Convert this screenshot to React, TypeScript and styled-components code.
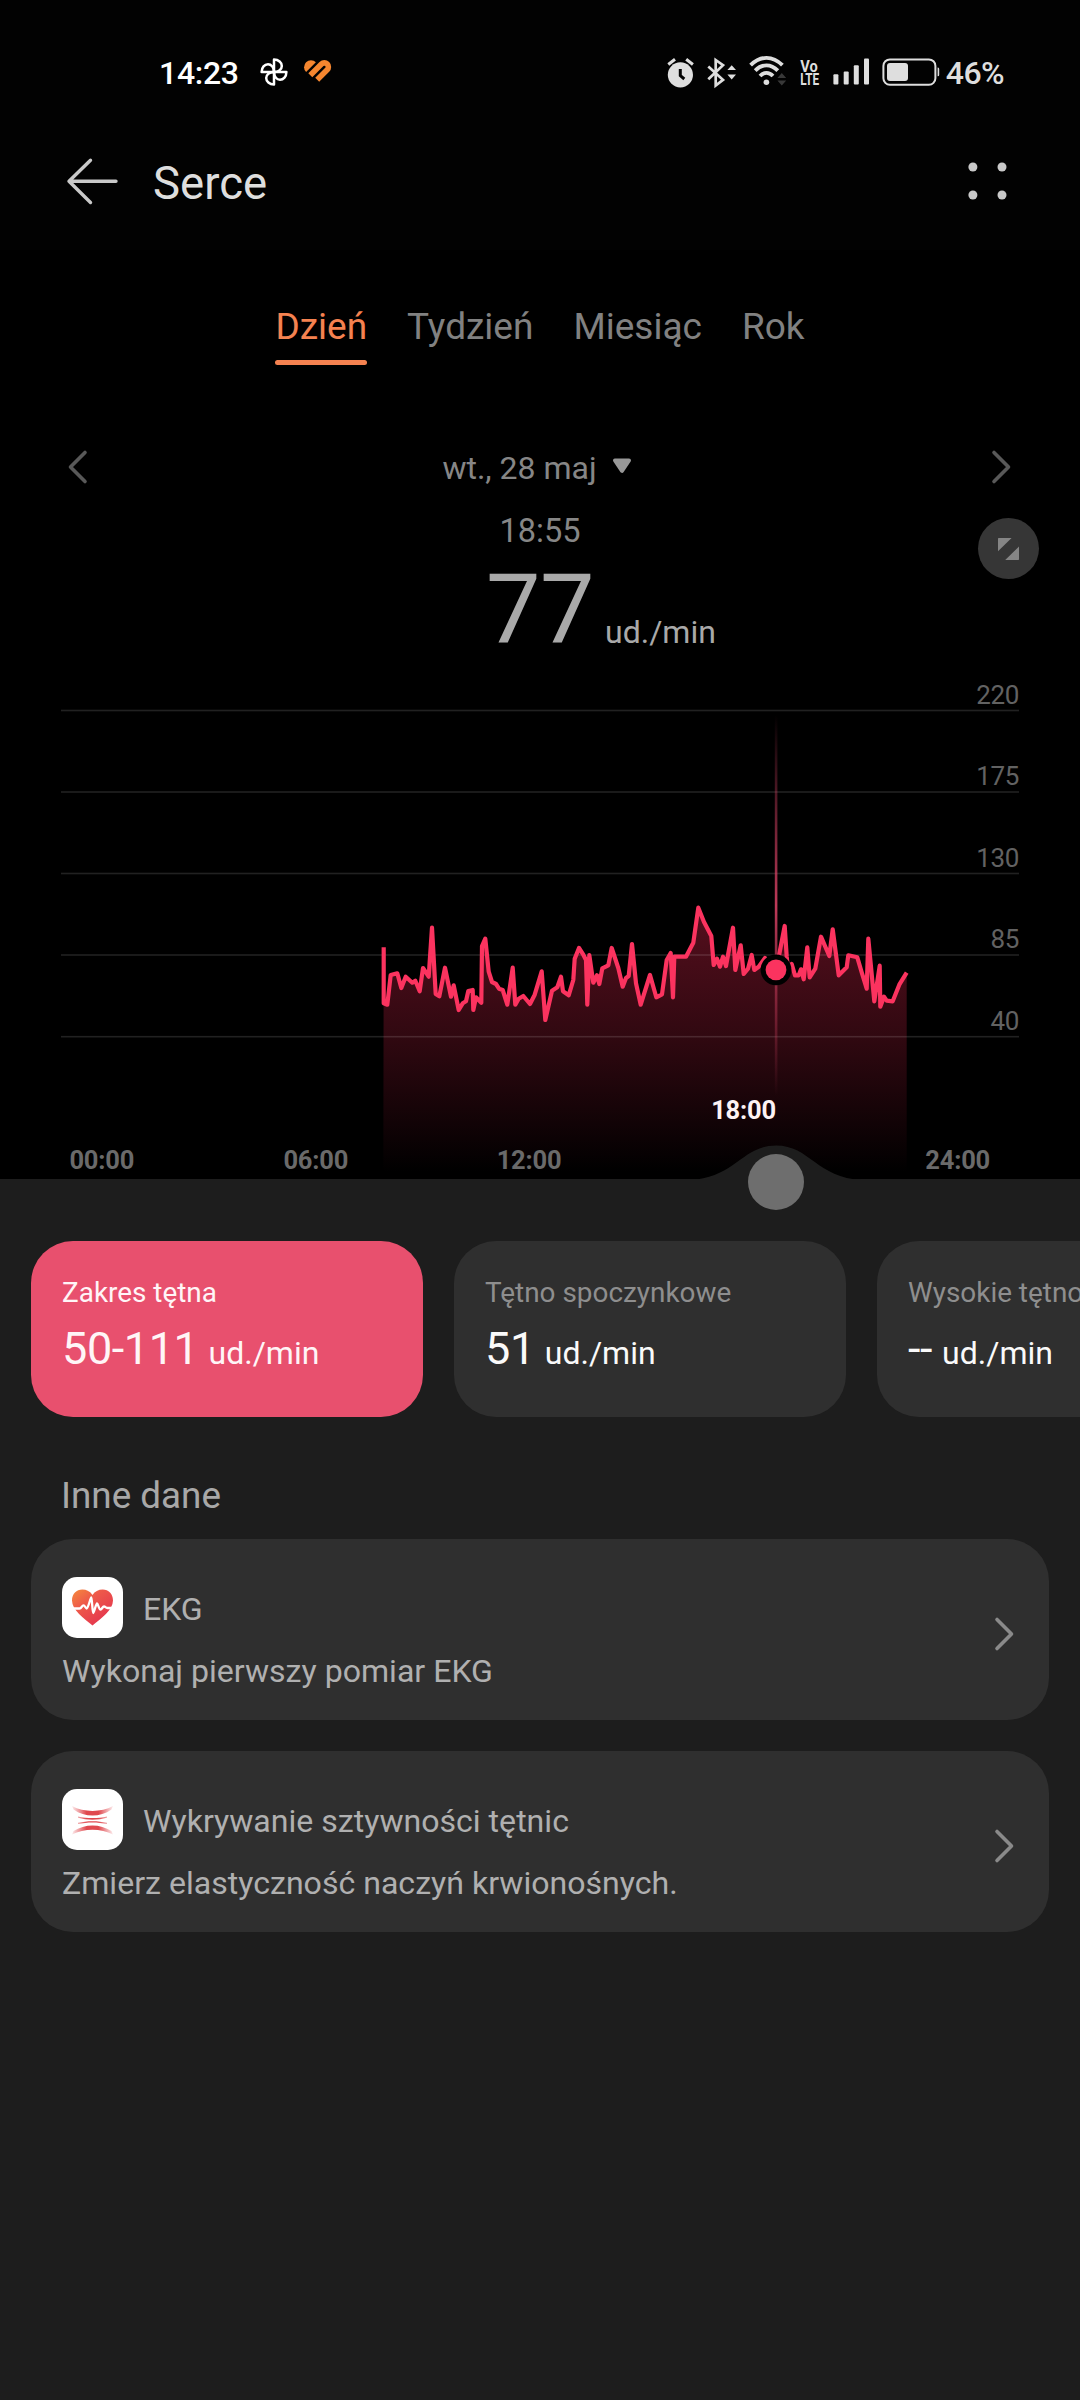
import React from "react";
import styled, { createGlobalStyle, css } from "styled-components";

const GlobalStyle = createGlobalStyle`
  html, body {
    margin: 0;
    background: #000;
  }
  body {
    font-family: Roboto, "Noto Sans", sans-serif;
    -webkit-font-smoothing: antialiased;
  }
  * { box-sizing: border-box; }
  button {
    font: inherit;
    color: inherit;
    background: none;
    border: 0;
    padding: 0;
  }
`;

const Screen = styled.div`
  width: 1080px;
  height: 2400px;
  display: flex;
  flex-direction: column;
  overflow: hidden;
  background: #000;
`;

/* ---------- Status bar ---------- */

const StatusBar = styled.div`
  height: 98px;
  padding: 48px 76px 0 159px;
  display: flex;
  justify-content: space-between;
  background: #020202;
  color: #fff;
`;

const StatusSide = styled.div`
  display: flex;
  align-items: center;
  height: 50px;
`;

const Clock = styled.span`
  width: 99px;
  font-size: 32px;
  font-weight: 500;
  letter-spacing: -0.3px;
`;

const Percent = styled.span`
  font-size: 32px;
  color: #dedede;
  font-weight: 500;
  letter-spacing: -0.6px;
`;

const StatusIcons = styled.svg`
  display: block;
  flex: none;
`;

/* ---------- App bar ---------- */

const AppBar = styled.header`
  height: 152px;
  padding: 20px 72px 0 62px;
  display: flex;
  align-items: center;
  background: #020202;
`;

const IconButton = styled.button`
  display: flex;
  flex: none;
  svg { display: block; }
`;

const Title = styled.h1`
  flex: 1;
  margin: 0 0 0 31px;
  font-size: 45.5px;
  font-weight: 400;
  line-height: 60px;
  color: #dedede;
`;

/* ---------- Tabs ---------- */

const Tabs = styled.nav`
  display: flex;
  justify-content: center;
  gap: 40px;
  padding-top: 54px;
`;

const Tab = styled.button<{ $active?: boolean }>`
  display: flex;
  flex-direction: column;
  gap: 10px;
  font-size: 37px;
  line-height: 46px;
  color: ${(p) => (p.$active ? "#f58250" : "#818181")};
  &::after {
    content: "";
    height: 5px;
    width: 100%;
    border-radius: 3px;
    background: ${(p) => (p.$active ? "#f58250" : "transparent")};
  }
`;

/* ---------- Date and reading ---------- */

const DateRow = styled.div`
  margin-top: 78px;
  height: 50px;
  padding: 0 67px 0 66px;
  display: flex;
  align-items: center;
  justify-content: space-between;
  > svg { margin-bottom: 3px; }
`;

const DateLabel = styled.button`
  display: flex;
  align-items: center;
  gap: 15px;
  padding-right: 5px;
  font-size: 32px;
  line-height: 50px;
  color: #868686;
`;

const Reading = styled.section`
  position: relative;
  height: 167px;
  padding-top: 16px;
  text-align: center;
`;

const ReadingTime = styled.div`
  font-size: 32.5px;
  line-height: 44px;
  color: #868686;
`;

const ReadingValue = styled.div`
  margin-top: 7px;
  display: grid;
  grid-template-columns: 1fr auto 1fr;
  align-items: baseline;
  line-height: 100px;
  color: #a9a9a9;
`;

const BigNumber = styled.span`
  grid-column: 2;
  font-size: 97px;
  letter-spacing: -0.5px;
`;

const BigUnit = styled.span`
  padding-left: 11px;
  text-align: left;
  font-size: 32px;
`;

const ExpandButton = styled.button`
  position: absolute;
  top: 25px;
  right: 41px;
  width: 61px;
  height: 61px;
  border-radius: 50%;
  background: #363636;
  display: flex;
  align-items: center;
  justify-content: center;
`;

/* ---------- Chart ---------- */

const ChartSvg = styled.svg`
  position: relative;
  z-index: 1;
  display: block;
  flex: none;
  overflow: visible;
`;

const AxisLabel = styled.text`
  font-size: 26px;
  letter-spacing: -0.4px;
  fill: #626262;
`;

const HourLabel = styled.text<{ $current?: boolean }>`
  font-size: 25.5px;
  letter-spacing: -0.2px;
  font-weight: 700;
  fill: ${(p) => (p.$current ? "#fdf2f4" : "#6a6a6a")};
`;

/* ---------- Lower sheet ---------- */

const Sheet = styled.main`
  flex: 1;
  padding: 62px 31px 0;
  background: #1d1d1d;
`;

const Metrics = styled.div`
  display: flex;
  gap: 31px;
  margin-right: -31px;
  overflow: hidden;
`;

const panel = css`
  border-radius: 42px;
  background: #2f2f2f;
`;

const MetricCard = styled.div<{ $active?: boolean }>`
  ${panel}
  flex: none;
  width: 392px;
  height: 176px;
  padding: 32px 31px;
  white-space: nowrap;
  color: ${(p) => (p.$active ? "#fff5f7" : "#fafafa")};
  ${(p) => p.$active && "background: #e8506e;"}
`;

const MetricLabel = styled.div<{ $active?: boolean }>`
  font-size: 27.9px;
  line-height: 40px;
  color: ${(p) => (p.$active ? "#fff5f7" : "#8e8e8e")};
`;

const MetricValue = styled.div`
  display: flex;
  align-items: baseline;
  gap: 10px;
  margin-top: 9px;
  font-size: 45px;
  letter-spacing: -0.4px;
  line-height: 54px;
`;

const MetricUnit = styled.span`
  font-size: 32px;
  letter-spacing: 0;
`;

const SectionTitle = styled.h2`
  margin: 56px 0 20px 30px;
  font-size: 36.8px;
  font-weight: 400;
  line-height: 46px;
  color: #a8a8a8;
`;

const ItemList = styled.div`
  display: grid;
  gap: 31px;
`;

const ItemCard = styled.article`
  ${panel}
  height: 181px;
  padding: 38px 33px 0 31px;
  display: grid;
  grid-template-columns: 1fr auto;
  column-gap: 20px;
`;

const ItemHead = styled.div`
  display: flex;
  align-items: center;
  gap: 20px;
`;

const ItemTitle = styled.span`
  font-size: 32.1px;
  line-height: 44px;
  color: #b0b0b0;
  padding-top: 2px;
`;

const ItemText = styled.p`
  margin: 11px 0 0;
  font-size: 32.1px;
  line-height: 45px;
  color: #b0b0b0;
`;

const AppIcon = styled.svg`
  display: block;
  width: 61px;
  height: 61px;
  border-radius: 15px;
  background: #fff;
`;

const ItemArrow = styled.div`
  padding-top: 38px;
`;

const ChevronSvg = styled.svg`
  display: block;
`;

function Chevron({ left, color }: { left?: boolean; color: string }) {
  return (
    <ChevronSvg width="24" height="38" viewBox="0 0 24 38">
      <path
        d={left ? "M19 4.5 4.5 19 19 33.5" : "M5 4.5 19.5 19 5 33.5"}
        fill="none"
        stroke={color}
        strokeWidth="3.6"
        strokeLinecap="round"
        strokeLinejoin="round"
      />
    </ChevronSvg>
  );
}

const CaretSvg = styled.svg`
  display: block;
  margin-bottom: 4px;
`;

function NotificationIcons() {
  const petal = "M0 0V-12.4C4.6-12.4 7.800-9.400 7.800-6 7.800-3 5 0 0 0Z";
  return (
    <StatusIcons width="76" height="50" viewBox="258 48 76 50">
      <g transform="translate(274 72)" fill="none" stroke="#fff" strokeWidth="2.5" strokeLinejoin="round">
        {[0, 90, 180, 270].map((a) => (
          <path key={a} d={petal} transform={`rotate(${a})`} />
        ))}
      </g>
      <path fill="#f5862f" d="M315.900 62.300A6.900 6.900 0 0 0 306.100 72.100Z" />
      <path
        fill="none"
        stroke="#f5862f"
        strokeWidth="5.600"
        d="M310.300 75.300 321.500 64.100A4 4 0 0 1 327.200 69.800L317.200 79.800"
      />
    </StatusIcons>
  );
}

function SystemIcons() {
  return (
    <StatusIcons width="282" height="50" viewBox="664 48 282 50">
      <g fill="#dedede">
        <circle cx="680.4" cy="74.8" r="12.6" />
        <path d="M668.3 64.5 675 59.2M692.9 64.5 686.2 59.2" stroke="#dedede" strokeWidth="3" />
        <path d="M680.3 69v6.6l4 3.4" fill="none" stroke="#020202" strokeWidth="3" />
        <path
          d="M708.3 66.5 723 79.8 715.7 85.5V60L723 65.2 708.3 79.3"
          fill="none"
          stroke="#dedede"
          strokeWidth="2.7"
        />
        <path d="M727.4 70h8.6l-4.3-4.8zM727.4 74.6h8.6l-4.3 4.8z" />
        <g fill="none" stroke="#dedede" strokeWidth="3.9">
          <path d="M750.6 65.2C760.5 55.4 772.5 55.4 782.4 65.2" />
          <path d="M755.2 70.6C762.2 63.6 770.8 63.6 777.8 70.6" />
          <path d="M760 76C764 71.8 769 71.8 773 76" />
        </g>
        <circle cx="766.4" cy="82.2" r="2.8" />
        <path d="M777.4 78h8.8l-4.4-5zM777.4 80.6h8.8l-4.4 5z" fill="#383838" />
        <text x="800.2" y="71.6" fontSize="16.5" fontWeight="700" textLength="17.5" lengthAdjust="spacingAndGlyphs">Vo</text>
        <text x="800.2" y="85" fontSize="16.5" fontWeight="700" textLength="19" lengthAdjust="spacingAndGlyphs">LTE</text>
        <rect x="833.4" y="74.2" width="5" height="10.4" rx="1" />
        <rect x="843.7" y="71.4" width="5" height="13.2" rx="1" />
        <rect x="853.8" y="65.2" width="5" height="19.4" rx="1" />
        <rect x="864" y="58.6" width="5" height="26" rx="1" />
        <rect x="883.4" y="59.4" width="52" height="25.4" rx="6.5" fill="none" stroke="#dedede" strokeWidth="2" />
        <rect x="887" y="63" width="21" height="18" rx="3" />
        <path d="M937.6 67.5h.4a1.4 1.4 0 0 1 1.2 1.4v6a1.4 1.4 0 0 1-1.2 1.4h-.4z" />
      </g>
    </StatusIcons>
  );
}

/* Heart-rate trace, in screen units. */
const trace: [number, number][] = [
  ...([
    [41, 262], [41, 430], [52, 434], [62, 345], [82, 340], [94, 384], [107, 350], [127, 368], [136, 362],
    [149, 394], [159, 324], [176, 350], [186, 203], [197, 402], [208, 409], [225, 323], [243, 410], [251, 376],
    [266, 450], [278, 430], [288, 424], [295, 393], [308, 390], [310, 450], [318, 412], [334, 428], [336, 258],
    [346, 236], [356, 335], [366, 366], [378, 372], [387, 386], [398, 390], [412, 434], [428, 323], [436, 434],
    [446, 416], [460, 408], [480, 432], [494, 404], [515, 334], [526, 480], [546, 392], [562, 382], [573, 350],
    [579, 394], [596, 406], [610, 360], [614, 296], [627, 264], [640, 284], [648, 300], [652, 434], [658, 285],
    [670, 368], [681, 346], [688, 372], [697, 325], [715, 316], [725, 264], [745, 324], [758, 380], [768, 354],
    [776, 348], [786, 252], [798, 370], [812, 434], [840, 345],
    [859, 412], [876, 403], [890, 300], [902, 279], [909, 412], [913, 290], [948, 290], [970, 248], [985, 143],
    [1002, 186], [1024, 228], [1031, 315], [1041, 296], [1050, 320], [1059, 290], [1068, 318], [1089, 203],
    [1096, 330], [1112, 256], [1121, 342], [1134, 326], [1145, 285], [1153, 330], [1166, 320], [1185, 294],
    [1200, 330], [1218, 330], [1228, 282], [1244, 198], [1250, 290], [1254, 330], [1265, 312], [1275, 346],
    [1286, 346], [1293, 328], [1301, 358], [1312, 262], [1319, 352], [1336, 326], [1353, 230], [1378, 288],
    [1388, 208], [1406, 346], [1430, 322], [1435, 286], [1462, 292], [1476, 340], [1490, 386], [1495, 236],
    [1513, 424], [1529, 317], [1531, 440], [1542, 410], [1550, 422], [1568, 424], [1588, 374], [1610, 338],
  ] as [number, number][]).map(([x, y]): [number, number] => [370 + x / 3, 860 + y / 3]),
];

const linePath = "M" + trace.map(([x, y]) => `${x.toFixed(1)} ${y.toFixed(1)}`).join("L");
const areaPath = `${linePath}L906.7 1172L383.3 1172Z`;

const gridRows = [
  { value: 220, y: 710.5 },
  { value: 175, y: 792 },
  { value: 130, y: 873.5 },
  { value: 85, y: 955 },
  { value: 40, y: 1036.7 },
];

const hours = [
  { label: "00:00", x: 101.8, y: 1169 },
  { label: "06:00", x: 315.8, y: 1169 },
  { label: "12:00", x: 529, y: 1169 },
  { label: "18:00", x: 743.5, y: 1119, current: true },
  { label: "24:00", x: 957.7, y: 1169 },
];

function HeartChart() {
  return (
    <ChartSvg width="1080" height="519" viewBox="0 660 1080 519">
      <defs>
        <linearGradient id="area" gradientUnits="userSpaceOnUse" x1="0" y1="900" x2="0" y2="1172">
          <stop offset="0" stopColor="#e82850" stopOpacity="0.38" />
          <stop offset="0.5" stopColor="#e82850" stopOpacity="0.21" />
          <stop offset="1" stopColor="#e82850" stopOpacity="0" />
        </linearGradient>
        <linearGradient id="cursor" gradientUnits="userSpaceOnUse" x1="0" y1="715" x2="0" y2="1096">
          <stop offset="0" stopColor="#e04468" stopOpacity="0" />
          <stop offset="0.5" stopColor="#e04468" stopOpacity="0.85" />
          <stop offset="1" stopColor="#e04468" stopOpacity="0" />
        </linearGradient>
      </defs>
      <path d={areaPath} fill="url(#area)" />
      {gridRows.map((row) => (
        <g key={row.value}>
          <rect x="61" y={row.y - 0.8} width="958" height="1.6" fill="#fff" fillOpacity="0.13" />
          <AxisLabel x="1019" y={row.y - 7} textAnchor="end">{row.value}</AxisLabel>
        </g>
      ))}
      <path d={linePath} fill="none" stroke="#fb335f" strokeWidth="4.2" strokeLinejoin="round" />
      <rect x="774.8" y="715" width="2.6" height="381" fill="url(#cursor)" />
      <circle cx="776" cy="969.8" r="15.4" fill="#000" />
      <circle cx="776" cy="969.8" r="10.4" fill="#fb335f" />
      {hours.map((h) => (
        <HourLabel key={h.label} x={h.x} y={h.y} $current={h.current} textAnchor="middle">{h.label}</HourLabel>
      ))}
      <path d="M690 1180C735 1178 742 1145.500 776 1145.500S817 1178 862 1180Z" fill="#1d1d1d" />
      <circle cx="776" cy="1182" r="28" fill="#6e6e6e" />
    </ChartSvg>
  );
}

function EcgIcon() {
  return (
    <AppIcon viewBox="0 0 61 61">
      <defs>
        <linearGradient id="heart" x1="0" y1="0" x2="0.7" y2="0.8">
          <stop offset="0" stopColor="#f58a3c" />
          <stop offset="0.45" stopColor="#ee5a4a" />
          <stop offset="1" stopColor="#e63c4e" />
        </linearGradient>
      </defs>
      <path
        fill="url(#heart)"
        d="M30.500 48.500C22 41.500 10 33 10 23.500 10 17 14.500 12.600 20.300 12.600 24.500 12.600 28.300 14.500 30.500 18 32.700 14.500 36.500 12.600 40.700 12.600 46.500 12.600 51 17 51 23.500 51 33 39 41.500 30.500 48.500Z"
      />
      <path
        d="M9 31.500H17.500C19.500 31.500 20 28.300 21.500 28.300S23.500 31.500 24.800 31.500 28.500 20.500 29.300 20.500 30.300 36 31.200 36 34 26.500 35 26.500 37 32.500 38.500 32.500 40.500 29.500 42 29.500 43.500 31 45.500 31H52"
        fill="none"
        stroke="#fff"
        strokeWidth="2.300"
        strokeLinejoin="round"
      />
    </AppIcon>
  );
}

function ArteryIcon() {
  return (
    <AppIcon viewBox="0 0 61 61">
      <defs>
        <linearGradient id="vessel" gradientUnits="userSpaceOnUse" x1="10" y1="0" x2="51" y2="0">
          <stop offset="0" stopColor="#e0494f" stopOpacity="0.1" />
          <stop offset="0.35" stopColor="#e0494f" />
          <stop offset="0.65" stopColor="#e0494f" />
          <stop offset="1" stopColor="#e0494f" stopOpacity="0.1" />
        </linearGradient>
      </defs>
      <g fill="url(#vessel)">
        <path d="M10 17C22 23.500 39 23.500 51 17L49.500 20.500C38 28.500 23 28.500 11.500 20.500Z" />
        <path d="M10 45.500C22 39 39 39 51 45.500L49.500 42C38 34.500 23 34.500 11.500 42Z" />
        <path d="M16 27.400C25 29.600 36 29.600 45 27.400V28.700C36 31.300 25 31.300 16 28.700Z" />
        <path d="M16 35.100C25 32.900 36 32.900 45 35.100V33.800C36 31.600 25 31.600 16 33.800Z" />
      </g>
    </AppIcon>
  );
}

const metrics = [
  { label: "Zakres tętna", value: "50-111", active: true },
  { label: "Tętno spoczynkowe", value: "51" },
  { label: "Wysokie tętno", value: "--" },
];

const items = [
  { title: "EKG", text: "Wykonaj pierwszy pomiar EKG", icon: <EcgIcon /> },
  { title: "Wykrywanie sztywności tętnic", text: "Zmierz elastyczność naczyń krwionośnych.", icon: <ArteryIcon /> },
];

export default function App() {
  return (
    <Screen>
      <GlobalStyle />
      <StatusBar>
        <StatusSide>
          <Clock>14:23</Clock>
          <NotificationIcons />
        </StatusSide>
        <StatusSide>
          <SystemIcons />
          <Percent>46%</Percent>
        </StatusSide>
      </StatusBar>

      <AppBar>
        <IconButton aria-label="Wstecz">
          <svg width="60" height="60" viewBox="62 154 60 60">
            <path
              d="M116 181.300H69M90.500 160.300 69 181.300 90.500 202.500"
              fill="none"
              stroke="#c9c9c9"
              strokeWidth="3.400"
              strokeLinecap="round"
              strokeLinejoin="round"
            />
          </svg>
        </IconButton>
        <Title>Serce</Title>
        <IconButton aria-label="Menu">
          <svg width="46" height="60" viewBox="962 154 46 60" fill="#c9c9c9">
            <circle cx="972.900" cy="167" r="4.500" />
            <circle cx="1002" cy="167" r="4.500" />
            <circle cx="972.900" cy="195" r="4.500" />
            <circle cx="1002" cy="195" r="4.500" />
          </svg>
        </IconButton>
      </AppBar>

      <Tabs>
        <Tab $active>Dzień</Tab>
        <Tab>Tydzień</Tab>
        <Tab>Miesiąc</Tab>
        <Tab>Rok</Tab>
      </Tabs>

      <DateRow>
        <Chevron left color="#585858" />
        <DateLabel>
          wt., 28 maj
          <CaretSvg width="20" height="16" viewBox="0 0 20 16">
            <path d="M3 2.500H17L10 12.800Z" fill="#989898" stroke="#989898" strokeWidth="4" strokeLinejoin="round" />
          </CaretSvg>
        </DateLabel>
        <Chevron color="#585858" />
      </DateRow>

      <Reading>
        <ReadingTime>18:55</ReadingTime>
        <ReadingValue>
          <BigNumber>77</BigNumber>
          <BigUnit>ud./min</BigUnit>
        </ReadingValue>
        <ExpandButton aria-label="Pełny ekran">
          <svg width="21" height="22" viewBox="0 0 21 22" fill="#858585">
            <path d="M.6 0H13.600L0 13.300V.6ZM21 8.500V21.400L20.400 22H7.200Z" />
          </svg>
        </ExpandButton>
      </Reading>

      <HeartChart />

      <Sheet>
        <Metrics>
          {metrics.map((m) => (
            <MetricCard key={m.label} $active={m.active}>
              <MetricLabel $active={m.active}>{m.label}</MetricLabel>
              <MetricValue>
                {m.value}
                <MetricUnit>ud./min</MetricUnit>
              </MetricValue>
            </MetricCard>
          ))}
        </Metrics>
        <SectionTitle>Inne dane</SectionTitle>
        <ItemList>
          {items.map((item) => (
            <ItemCard key={item.title}>
              <div>
                <ItemHead>
                  {item.icon}
                  <ItemTitle>{item.title}</ItemTitle>
                </ItemHead>
                <ItemText>{item.text}</ItemText>
              </div>
              <ItemArrow>
                <Chevron color="#8a8a8a" />
              </ItemArrow>
            </ItemCard>
          ))}
        </ItemList>
      </Sheet>
    </Screen>
  );
}
